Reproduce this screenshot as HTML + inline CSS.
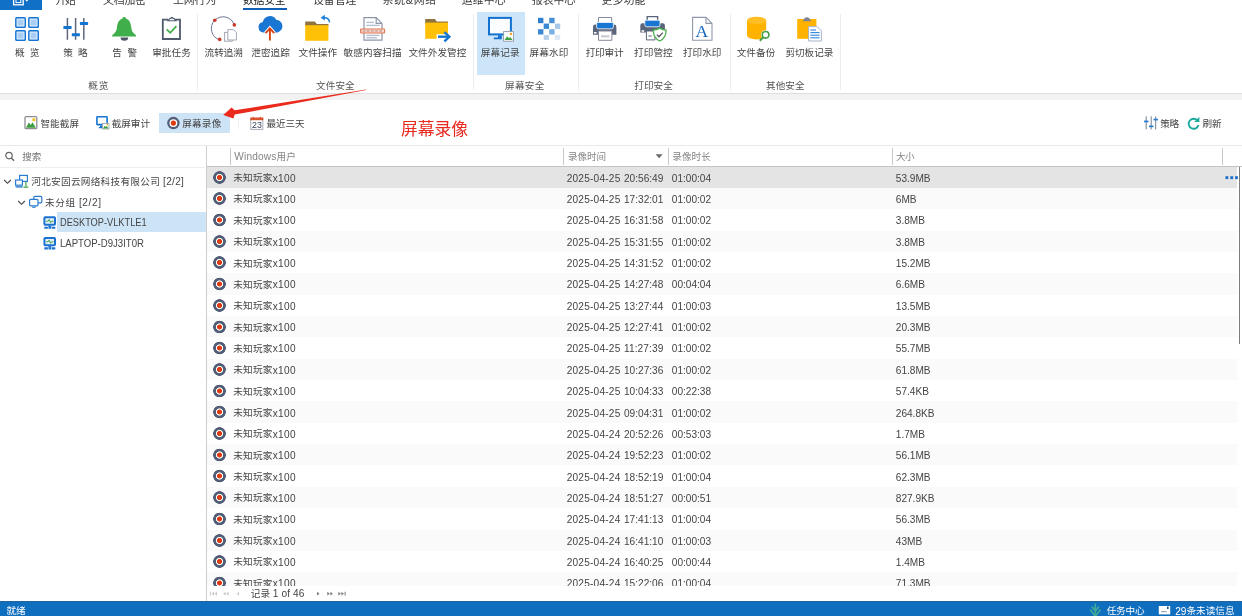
<!DOCTYPE html>
<html lang="zh-CN"><head><meta charset="utf-8"><title>屏幕录像</title>
<style>
*{box-sizing:border-box;margin:0;padding:0}
html,body{width:1242px;height:616px;overflow:hidden;background:#fff}
body{font-family:"Liberation Sans","Noto Sans CJK SC",sans-serif;font-size:9.6px;color:#444;position:relative}
.l{font-size:10.1px}
.t{position:absolute;white-space:nowrap;line-height:14px;height:14px}
#tabs{position:absolute;left:0;top:0;width:1242px;height:11px;background:#fff;overflow:hidden}
#appbtn{position:absolute;left:0;top:0;width:42px;height:9.5px;background:#106fc7}
.tab{font-size:10.9px;color:#3a3a3a;top:-7.3px}
#tabul{position:absolute;left:242.5px;top:7.5px;width:44.4px;height:2.4px;background:#115fb5}
#ribbon{position:absolute;left:0;top:11px;width:1242px;height:82.8px;background:#fff;border-bottom:1px solid #dedede}
#rbsel{position:absolute;left:477px;top:12.2px;width:47.8px;height:62.6px;background:#cce5f8}
.rb{top:45.5px;color:#444}
.gl{top:79.1px;color:#555}
.gsep{position:absolute;top:14px;width:1px;height:76px;background:#ededed}
#band{position:absolute;left:0;top:93.8px;width:1242px;height:5.8px;background:#f2f2f2}
#toolbar{position:absolute;left:0;top:100px;width:1242px;height:45.5px;background:#fff}
#tbsel{position:absolute;left:158.7px;top:112.7px;width:71px;height:20.2px;background:#cde3f6}
#tbsep{position:absolute;left:237.5px;top:117.5px;width:1px;height:11px;background:#efefef}
.tb{top:117.2px;color:#444}
#topline{position:absolute;left:0;top:145px;width:1242px;height:1px;background:#e9e9e9}
#searchline{position:absolute;left:0;top:167px;width:205px;height:1px;background:#efefef}
#trsel{position:absolute;left:57px;top:212.4px;width:148.6px;height:20.1px;background:#cde3f6}
#splitter{position:absolute;left:205.6px;top:167px;width:1px;height:434px;background:#ececec}
#vline{position:absolute;left:206.2px;top:146px;width:1px;height:455px;background:#cdcdcd}
.tr{color:#444}
#hdrline{position:absolute;left:207px;top:165.7px;width:1035px;height:1px;background:#c4c4c4}
.hc{top:149.7px;color:#858585}
.hs{position:absolute;top:147.5px;width:1px;height:17.5px;background:#c9c9c9}
.row{position:absolute;left:207.2px;width:1030.3px;height:21.4px;background:#fff}
.row.alt{background:#fafafa}
.row.sel{background:#e4e4e4}
.row .t{top:4.7px}
.row .t.l{top:5.2px}
.t .l{position:relative;top:.5px}
.rec{position:absolute;left:5.4px;top:4px;width:13.6px;height:13.6px;background:radial-gradient(circle closest-side,#dc3b0f 0,#dc3b0f 2.2px,#fff 2.8px,#fff 3.3px,#525e77 3.9px,#525e77 6px,rgba(82,94,119,0) 6.6px)}
#sbar{position:absolute;left:1238.6px;top:166.5px;width:1.6px;height:177px;background:#7d7d7d}
#pager{position:absolute;left:207.2px;top:586px;width:1034.8px;height:15px;background:#fff}
#status{position:absolute;left:0;top:601px;width:1242px;height:15px;background:#106ebf;border-top:1px solid #22649f}
.st{color:#fff;top:604px}
#anno{font-size:16.8px;line-height:22px;height:22px;color:#e82a1f;top:118.5px}
#app{position:absolute;left:0;top:0;width:1242px;height:616px;overflow:hidden;background:#fff;will-change:transform}
</style></head><body><div id="app">

<div id="tabs">
<div id="appbtn"></div>
<span class="t tab" style="left:55.4px;letter-spacing:-1.20px">开始</span>
<span class="t tab" style="left:103.0px;letter-spacing:-0.13px">文档加密</span>
<span class="t tab" style="left:172.9px;letter-spacing:-0.06px">上网行为</span>
<span class="t tab" style="left:243.1px;letter-spacing:-0.36px;color:#222">数据安全</span>
<span class="t tab" style="left:313.0px;letter-spacing:-0.03px">设备管理</span>
<span class="t tab" style="left:382.6px;letter-spacing:0.69px">系统&amp;网络</span>
<span class="t tab" style="left:461.7px;letter-spacing:0.17px">运维中心</span>
<span class="t tab" style="left:531.9px;letter-spacing:-0.03px">报表中心</span>
<span class="t tab" style="left:601.4px;letter-spacing:0.17px">更多功能</span>
<div id="tabul"></div>
</div>

<div id="ribbon"></div>
<div id="rbsel"></div>
<div class="gsep" style="left:197px"></div>
<div class="gsep" style="left:473px"></div>
<div class="gsep" style="left:578px"></div>
<div class="gsep" style="left:729.5px"></div>
<div class="gsep" style="left:840.3px"></div>
<span class="t rb" style="left:15.0px;letter-spacing:1.27px">概 览</span>
<span class="t rb" style="left:63.3px;letter-spacing:1.27px">策 略</span>
<span class="t rb" style="left:112.3px;letter-spacing:1.42px">告 警</span>
<span class="t rb" style="left:152.2px;letter-spacing:0.08px">审批任务</span>
<span class="t rb" style="left:204.6px;letter-spacing:-0.06px">流转追溯</span>
<span class="t rb" style="left:251.2px;letter-spacing:0.11px">泄密追踪</span>
<span class="t rb" style="left:298.5px;letter-spacing:0.08px">文件操作</span>
<span class="t rb" style="left:343.6px;letter-spacing:0.09px">敏感内容扫描</span>
<span class="t rb" style="left:408.4px;letter-spacing:0.07px">文件外发管控</span>
<span class="t rb" style="left:480.8px;letter-spacing:0.11px">屏幕记录</span>
<span class="t rb" style="left:529.6px;letter-spacing:0.11px">屏幕水印</span>
<span class="t rb" style="left:585.7px;letter-spacing:-0.16px">打印审计</span>
<span class="t rb" style="left:634.0px;letter-spacing:0.11px">打印管控</span>
<span class="t rb" style="left:683.0px">打印水印</span>
<span class="t rb" style="left:736.7px;letter-spacing:0.07px">文件备份</span>
<span class="t rb" style="left:785.5px;letter-spacing:-0.04px">剪切板记录</span>
<span class="t gl" style="left:88.3px;letter-spacing:0.81px">概览</span>
<span class="t gl" style="left:316.0px;letter-spacing:0.11px">文件安全</span>
<span class="t gl" style="left:505.0px;letter-spacing:0.34px">屏幕安全</span>
<span class="t gl" style="left:634.2px;letter-spacing:0.11px">打印安全</span>
<span class="t gl" style="left:766.0px;letter-spacing:0.08px">其他安全</span>
<div id="band"></div>

<div id="toolbar"></div>
<div id="tbsel"></div><div id="tbsep"></div>
<span class="t tb" style="left:40.4px;letter-spacing:0.08px">智能截屏</span>
<span class="t tb" style="left:111.8px;letter-spacing:-0.06px">截屏审计</span>
<span class="t tb" style="left:182.2px;letter-spacing:0.24px">屏幕录像</span>
<span class="t tb" style="left:266.4px;letter-spacing:-0.06px">最近三天</span>
<span class="t tb" style="left:1160.2px;letter-spacing:-0.29px">策略</span>
<span class="t tb" style="left:1202.6px;letter-spacing:-0.29px">刷新</span>
<div id="topline"></div>

<div id="searchline"></div>
<div id="trsel"></div>
<span class="t tr" style="left:22.3px;letter-spacing:-0.09px;top:150.2px;color:#727272">搜索</span>
<span class="t tr" style="left:31.3px;letter-spacing:0.31px;top:174.9px">河北安固云网络科技有限公司 <span class="l">[2/2]</span></span>
<span class="t tr" style="left:45.0px;letter-spacing:0.61px;top:195.6px">未分组 <span class="l">[2/2]</span></span>
<span class="t tr l" style="left:59.8px;transform:scaleX(0.915);transform-origin:0 0;top:216.3px">DESKTOP-VLKTLE1</span>
<span class="t tr l" style="left:59.8px;transform:scaleX(0.949);transform-origin:0 0;top:236.9px">LAPTOP-D9J3IT0R</span>
<div id="splitter"></div>
<div id="vline"></div>

<div class="hs" style="left:230.2px"></div>
<span class="t hc" style="left:234.3px;letter-spacing:0.18px"><span class="l">Windows</span>用户</span>
<div class="hs" style="left:563.2px"></div>
<span class="t hc" style="left:567.9px;letter-spacing:-0.02px">录像时间</span>
<div class="hs" style="left:668px"></div>
<span class="t hc" style="left:672.2px;letter-spacing:0.11px">录像时长</span>
<div class="hs" style="left:892.2px"></div>
<span class="t hc" style="left:896.1px;letter-spacing:-0.69px">大小</span>
<div class="hs" style="left:1222px"></div>

<div class="row sel" style="top:166.5px;height:21.4px;overflow:hidden"><i class="rec"></i><span class="t" style="left:26.0px;letter-spacing:0.29px">未知玩家<span class="l">x100</span></span><span class="t l" style="left:359.5px;letter-spacing:0.22px">2025-04-25</span><span class="t l" style="left:416.8px">20:56:49</span><span class="t l" style="left:464.6px;letter-spacing:-0.01px">01:00:04</span><span class="t l" style="left:688.6px">53.9MB</span></div>
<div class="row alt" style="top:187.8px;height:21.4px;overflow:hidden"><i class="rec"></i><span class="t" style="left:26.0px;letter-spacing:0.29px">未知玩家<span class="l">x100</span></span><span class="t l" style="left:359.5px;letter-spacing:0.22px">2025-04-25</span><span class="t l" style="left:416.8px">17:32:01</span><span class="t l" style="left:464.6px;letter-spacing:-0.01px">01:00:02</span><span class="t l" style="left:688.6px">6MB</span></div>
<div class="row" style="top:209.2px;height:21.4px;overflow:hidden"><i class="rec"></i><span class="t" style="left:26.0px;letter-spacing:0.29px">未知玩家<span class="l">x100</span></span><span class="t l" style="left:359.5px;letter-spacing:0.22px">2025-04-25</span><span class="t l" style="left:416.8px">16:31:58</span><span class="t l" style="left:464.6px;letter-spacing:-0.01px">01:00:02</span><span class="t l" style="left:688.6px">3.8MB</span></div>
<div class="row alt" style="top:230.6px;height:21.4px;overflow:hidden"><i class="rec"></i><span class="t" style="left:26.0px;letter-spacing:0.29px">未知玩家<span class="l">x100</span></span><span class="t l" style="left:359.5px;letter-spacing:0.22px">2025-04-25</span><span class="t l" style="left:416.8px">15:31:55</span><span class="t l" style="left:464.6px;letter-spacing:-0.01px">01:00:02</span><span class="t l" style="left:688.6px">3.8MB</span></div>
<div class="row" style="top:251.9px;height:21.4px;overflow:hidden"><i class="rec"></i><span class="t" style="left:26.0px;letter-spacing:0.29px">未知玩家<span class="l">x100</span></span><span class="t l" style="left:359.5px;letter-spacing:0.22px">2025-04-25</span><span class="t l" style="left:416.8px">14:31:52</span><span class="t l" style="left:464.6px;letter-spacing:-0.01px">01:00:02</span><span class="t l" style="left:688.6px">15.2MB</span></div>
<div class="row alt" style="top:273.2px;height:21.4px;overflow:hidden"><i class="rec"></i><span class="t" style="left:26.0px;letter-spacing:0.29px">未知玩家<span class="l">x100</span></span><span class="t l" style="left:359.5px;letter-spacing:0.22px">2025-04-25</span><span class="t l" style="left:416.8px">14:27:48</span><span class="t l" style="left:464.6px;letter-spacing:-0.01px">00:04:04</span><span class="t l" style="left:688.6px">6.6MB</span></div>
<div class="row" style="top:294.6px;height:21.4px;overflow:hidden"><i class="rec"></i><span class="t" style="left:26.0px;letter-spacing:0.29px">未知玩家<span class="l">x100</span></span><span class="t l" style="left:359.5px;letter-spacing:0.22px">2025-04-25</span><span class="t l" style="left:416.8px">13:27:44</span><span class="t l" style="left:464.6px;letter-spacing:-0.01px">01:00:03</span><span class="t l" style="left:688.6px">13.5MB</span></div>
<div class="row alt" style="top:316.0px;height:21.4px;overflow:hidden"><i class="rec"></i><span class="t" style="left:26.0px;letter-spacing:0.29px">未知玩家<span class="l">x100</span></span><span class="t l" style="left:359.5px;letter-spacing:0.22px">2025-04-25</span><span class="t l" style="left:416.8px">12:27:41</span><span class="t l" style="left:464.6px;letter-spacing:-0.01px">01:00:02</span><span class="t l" style="left:688.6px">20.3MB</span></div>
<div class="row" style="top:337.3px;height:21.4px;overflow:hidden"><i class="rec"></i><span class="t" style="left:26.0px;letter-spacing:0.29px">未知玩家<span class="l">x100</span></span><span class="t l" style="left:359.5px;letter-spacing:0.22px">2025-04-25</span><span class="t l" style="left:416.8px;letter-spacing:0.11px">11:27:39</span><span class="t l" style="left:464.6px;letter-spacing:-0.01px">01:00:02</span><span class="t l" style="left:688.6px">55.7MB</span></div>
<div class="row alt" style="top:358.6px;height:21.4px;overflow:hidden"><i class="rec"></i><span class="t" style="left:26.0px;letter-spacing:0.29px">未知玩家<span class="l">x100</span></span><span class="t l" style="left:359.5px;letter-spacing:0.22px">2025-04-25</span><span class="t l" style="left:416.8px">10:27:36</span><span class="t l" style="left:464.6px;letter-spacing:-0.01px">01:00:02</span><span class="t l" style="left:688.6px">61.8MB</span></div>
<div class="row" style="top:380.0px;height:21.4px;overflow:hidden"><i class="rec"></i><span class="t" style="left:26.0px;letter-spacing:0.29px">未知玩家<span class="l">x100</span></span><span class="t l" style="left:359.5px;letter-spacing:0.22px">2025-04-25</span><span class="t l" style="left:416.8px">10:04:33</span><span class="t l" style="left:464.6px;letter-spacing:-0.01px">00:22:38</span><span class="t l" style="left:688.6px">57.4KB</span></div>
<div class="row alt" style="top:401.4px;height:21.4px;overflow:hidden"><i class="rec"></i><span class="t" style="left:26.0px;letter-spacing:0.29px">未知玩家<span class="l">x100</span></span><span class="t l" style="left:359.5px;letter-spacing:0.22px">2025-04-25</span><span class="t l" style="left:416.8px">09:04:31</span><span class="t l" style="left:464.6px;letter-spacing:-0.01px">01:00:02</span><span class="t l" style="left:688.6px">264.8KB</span></div>
<div class="row" style="top:422.7px;height:21.4px;overflow:hidden"><i class="rec"></i><span class="t" style="left:26.0px;letter-spacing:0.29px">未知玩家<span class="l">x100</span></span><span class="t l" style="left:359.5px;letter-spacing:0.22px">2025-04-24</span><span class="t l" style="left:416.8px">20:52:26</span><span class="t l" style="left:464.6px;letter-spacing:-0.01px">00:53:03</span><span class="t l" style="left:688.6px">1.7MB</span></div>
<div class="row alt" style="top:444.1px;height:21.4px;overflow:hidden"><i class="rec"></i><span class="t" style="left:26.0px;letter-spacing:0.29px">未知玩家<span class="l">x100</span></span><span class="t l" style="left:359.5px;letter-spacing:0.22px">2025-04-24</span><span class="t l" style="left:416.8px">19:52:23</span><span class="t l" style="left:464.6px;letter-spacing:-0.01px">01:00:02</span><span class="t l" style="left:688.6px">56.1MB</span></div>
<div class="row" style="top:465.4px;height:21.4px;overflow:hidden"><i class="rec"></i><span class="t" style="left:26.0px;letter-spacing:0.29px">未知玩家<span class="l">x100</span></span><span class="t l" style="left:359.5px;letter-spacing:0.22px">2025-04-24</span><span class="t l" style="left:416.8px">18:52:19</span><span class="t l" style="left:464.6px;letter-spacing:-0.01px">01:00:04</span><span class="t l" style="left:688.6px">62.3MB</span></div>
<div class="row alt" style="top:486.8px;height:21.4px;overflow:hidden"><i class="rec"></i><span class="t" style="left:26.0px;letter-spacing:0.29px">未知玩家<span class="l">x100</span></span><span class="t l" style="left:359.5px;letter-spacing:0.22px">2025-04-24</span><span class="t l" style="left:416.8px">18:51:27</span><span class="t l" style="left:464.6px;letter-spacing:-0.01px">00:00:51</span><span class="t l" style="left:688.6px">827.9KB</span></div>
<div class="row" style="top:508.1px;height:21.4px;overflow:hidden"><i class="rec"></i><span class="t" style="left:26.0px;letter-spacing:0.29px">未知玩家<span class="l">x100</span></span><span class="t l" style="left:359.5px;letter-spacing:0.22px">2025-04-24</span><span class="t l" style="left:416.8px">17:41:13</span><span class="t l" style="left:464.6px;letter-spacing:-0.01px">01:00:04</span><span class="t l" style="left:688.6px">56.3MB</span></div>
<div class="row alt" style="top:529.5px;height:21.4px;overflow:hidden"><i class="rec"></i><span class="t" style="left:26.0px;letter-spacing:0.29px">未知玩家<span class="l">x100</span></span><span class="t l" style="left:359.5px;letter-spacing:0.22px">2025-04-24</span><span class="t l" style="left:416.8px">16:41:10</span><span class="t l" style="left:464.6px;letter-spacing:-0.01px">01:00:03</span><span class="t l" style="left:688.6px">43MB</span></div>
<div class="row" style="top:550.8px;height:21.4px;overflow:hidden"><i class="rec"></i><span class="t" style="left:26.0px;letter-spacing:0.29px">未知玩家<span class="l">x100</span></span><span class="t l" style="left:359.5px;letter-spacing:0.22px">2025-04-24</span><span class="t l" style="left:416.8px">16:40:25</span><span class="t l" style="left:464.6px;letter-spacing:-0.01px">00:00:44</span><span class="t l" style="left:688.6px">1.4MB</span></div>
<div class="row alt" style="top:572.2px;height:13.8px;overflow:hidden"><i class="rec"></i><span class="t" style="left:26.0px;letter-spacing:0.29px">未知玩家<span class="l">x100</span></span><span class="t l" style="left:359.5px;letter-spacing:0.22px">2025-04-24</span><span class="t l" style="left:416.8px">15:22:06</span><span class="t l" style="left:464.6px;letter-spacing:-0.01px">01:00:04</span><span class="t l" style="left:688.6px">71.3MB</span></div>
<div id="hdrline"></div>
<div id="sbar"></div>

<div id="pager"></div>
<span class="t" style="left:250.7px;letter-spacing:0.10px;top:586.6px;color:#444">记录 <span class="l">1 of 46</span></span>

<div id="status"></div>
<span class="t st" style="left:6.6px;letter-spacing:-0.19px">就绪</span>
<span class="t st" style="left:1106.7px;letter-spacing:-0.19px">任务中心</span>
<span class="t st" style="left:1175.2px;letter-spacing:0.02px"><span class="l">29</span>条未读信息</span>

<span class="t" id="anno" style="left:401.0px;letter-spacing:-0.01px">屏幕录像</span>
<svg id="icons" width="1242" height="616" viewBox="0 0 1242 616" style="position:absolute;left:0;top:0;pointer-events:none">
<!-- app button glyph -->
<g fill="none" stroke="#fff" stroke-width="1.3"><rect x="13.6" y="-3" width="9.6" height="7.8"/><rect x="16" y="-1" width="4.8" height="3.6" stroke-width="1"/></g>
<rect x="25.8" y="0" width="2" height="1.2" fill="#fff"/>

<!-- 1 概览 -->
<g fill="#a9cef5" stroke="#1474d1" stroke-width="1.5">
<rect x="15.85" y="17.85" width="9.4" height="9.4" rx=".8"/><rect x="28.85" y="17.85" width="9.4" height="9.4" rx=".8"/>
<rect x="15.85" y="30.85" width="9.4" height="9.4" rx=".8"/><rect x="28.85" y="30.85" width="9.4" height="9.4" rx=".8"/>
</g>
<g fill="none" stroke="#dcecfb" stroke-width=".9">
<rect x="17.2" y="19.2" width="6.7" height="6.7"/><rect x="30.2" y="19.2" width="6.7" height="6.7"/>
<rect x="17.2" y="32.2" width="6.7" height="6.7"/><rect x="30.2" y="32.2" width="6.7" height="6.7"/>
</g>

<!-- 2 策略 -->
<g stroke="#5e677b" stroke-width="1.5"><line x1="67.4" y1="18" x2="67.4" y2="39.8"/><line x1="75.6" y1="18" x2="75.6" y2="39.8"/><line x1="83.8" y1="18" x2="83.8" y2="39.8"/></g>
<g fill="#1474d1"><rect x="63.4" y="25.9" width="8.2" height="3.1" rx=".6"/><rect x="71.8" y="33.2" width="8.1" height="3.1" rx=".6"/><rect x="79.9" y="21.9" width="8.2" height="3.1" rx=".6"/></g>

<!-- 3 告警 bell -->
<path d="M120.6 37.6h7.6a3.8 3.2 0 0 1-7.6 0z" fill="#4d5668"/>
<circle cx="124.2" cy="18.9" r="2" fill="#40ae4a"/>
<path d="M124.2 18.4C129.2 18.4 130.8 22.6 131.2 27C131.6 31 132.8 32.8 136 35.2L136 36.5L112.2 36.5L112.2 35.2C115.4 32.8 116.6 31 117 27C117.4 22.6 119.2 18.4 124.2 18.4Z" fill="#40ae4a"/>

<!-- 4 审批任务 -->
<g fill="none" stroke="#505a6d" stroke-width="1.8"><path d="M168 19.7h-5.2v19.3h17.2v-19.3h-5.2"/></g>
<path d="M167.8 20.8l2.2-2.4h1a.9 1.1 0 0 1 1.8 0h1l2.2 2.4z" fill="#fff" stroke="#505a6d" stroke-width="1.1"/>
<path d="M166.7 29.3l3.5 3.5 6.2-6.6" fill="none" stroke="#40ae4a" stroke-width="1.8"/>

<!-- 5 流转追溯 -->
<path d="M219.5 39.8A11.8 11.8 0 1 1 234.3 24.75" fill="none" stroke="#6d7391" stroke-width="1"/>
<circle cx="214.8" cy="20.2" r="1.8" fill="#c9382b"/><circle cx="234.3" cy="24.9" r="1.8" fill="#c9382b"/><circle cx="219.7" cy="39.4" r="1.8" fill="#c9382b"/>
<g fill="#fff" stroke="#a3a7b5" stroke-width="1"><rect x="224.6" y="32.4" width="7.6" height="8.8"/><path d="M227.8 29.6h5.6l3 3v7.4h-8.6z"/></g>

<!-- 6 泄密追踪 -->
<path d="M263.4 32.4a5.2 5.2 0 0 1-.6-10.3 7.2 7.2 0 0 1 13.4-2.3 6.4 6.4 0 0 1 1.4 12.6z" fill="#1976d2"/>
<path d="M269.9 40.4v-12M265.4 33.1l4.5-4.9 4.5 4.9" fill="none" stroke="#fff" stroke-width="3.6"/>
<path d="M269.9 40.4v-11.6M265.6 33.1l4.3-4.7 4.3 4.7" fill="none" stroke="#d84315" stroke-width="1.9"/>

<!-- 7 文件操作 -->
<path d="M305.2 21.6h9.6l2 2.4h11.6v2h-23.2z" fill="#8d7440"/>
<rect x="305.2" y="25.2" width="23.2" height="15.6" fill="#ffc107"/>
<path d="M329.6 22.4c-.4-3-2.8-4.8-6.2-4.8" fill="none" stroke="#1e7fd6" stroke-width="1.5"/>
<path d="M324.8 14.8l-4.2 2.9 4.2 2.9z" fill="#1e7fd6"/>

<!-- 8 敏感内容扫描 -->
<path d="M364 17.6h12.2l5.8 5.8v16.8h-18z" fill="#fff" stroke="#8d95a8" stroke-width="1.2"/>
<path d="M376.2 17.6v5.8h5.8" fill="none" stroke="#8d95a8" stroke-width="1.2"/>
<g stroke="#b4c0d4" stroke-width="1.4"><line x1="366.4" y1="22.4" x2="374" y2="22.4"/><line x1="366.4" y1="25.4" x2="379.6" y2="25.4"/><line x1="366.4" y1="35.4" x2="379.6" y2="35.4"/><line x1="366.4" y1="37.8" x2="377" y2="37.8"/></g>
<rect x="360.6" y="29" width="24" height="4" rx=".8" fill="#f8ddd3" stroke="#e0714f" stroke-width="1.1"/>
<line x1="362.4" y1="31" x2="382.8" y2="31" stroke="#b98374" stroke-width="1.2" stroke-dasharray="3 1.2"/>

<!-- 9 文件外发管控 -->
<path d="M425.2 19h9.6l2 2.4h11.2v2h-22.8z" fill="#8d7440"/>
<rect x="425.2" y="22.6" width="22.8" height="16.2" fill="#ffc107"/>
<path d="M436.6 36.7h10" fill="none" stroke="#fff" stroke-width="5"/>
<path d="M438 36.7h10.4" fill="none" stroke="#1474d1" stroke-width="2.4"/>
<path d="M444.4 32.1l4.9 4.6-4.9 4.6" fill="none" stroke="#1474d1" stroke-width="2.4"/>

<!-- 11 屏幕水印 -->
<g>
<rect x="538" y="17.8" width="5.4" height="5.4" fill="#2f80d0"/><rect x="549.2" y="17.8" width="5.4" height="5.4" fill="#4a90d8"/>
<rect x="543.7" y="23.6" width="5.3" height="5.3" fill="#3a88d4"/><rect x="555" y="23.6" width="5.2" height="5.3" fill="#a8c8ea"/>
<rect x="538" y="29.2" width="5.4" height="5.3" fill="#3c88d4"/><rect x="549.2" y="29.2" width="5.4" height="5.3" fill="#7ab0e2"/>
<rect x="543.7" y="35" width="5.3" height="4.9" fill="#b8d0ec"/><rect x="555" y="35" width="5.2" height="4.9" fill="#dde8f5"/>
</g>

<!-- 10 屏幕记录 -->
<rect x="489" y="17.9" width="21.9" height="16.5" fill="#fbfdff" stroke="#1372d0" stroke-width="2"/>
<path d="M498 35.2h3.8v4.1h-8v-1.8h4.2z" fill="#1372d0"/>
<rect x="503.6" y="31.6" width="9.8" height="9.6" fill="#fff" stroke="#8f96a3" stroke-width=".9"/>
<path d="M504.6 39.9l2.5-3.6 1.8 2 1.4-1.4 2.3 3z" fill="#3fa046"/>
<circle cx="510.9" cy="33.9" r="1.2" fill="#f6a21a"/>

<!-- 12 打印审计 -->
<path d="M598.5 17.5h13.2v6h-13.2z" fill="#fff" stroke="#858b9a" stroke-width="1"/>
<path d="M593 27a2.4 2.4 0 0 1 2.4-2.4h18.6a2.4 2.4 0 0 1 2.4 2.4v7.8h-23.4z" fill="#5b657a"/>
<path d="M596.6 22.4h16.8v4.4a2 2 0 0 1-2 2h-12.8a2 2 0 0 1-2-2z" fill="#1976d2" stroke="#fff" stroke-width=".8"/>
<path d="M598.5 31h13.4v9.3h-13.4z" fill="#fff" stroke="#858b9a" stroke-width="1"/>
<rect x="594" y="32" width="2.6" height="1.6" fill="#fff"/>
<rect x="601" y="35.2" width="8.4" height="2.2" fill="#c9ccd5"/>

<!-- 13 打印管控 -->
<path d="M647.2 16.6h10.4v5h-10.4z" fill="#fff" stroke="#5b657a" stroke-width="1.4"/>
<path d="M640.3 25.4a2.2 2.2 0 0 1 2.2-2.2h20.2a2.2 2.2 0 0 1 2.2 2.2v7.2h-24.6z" fill="#5b657a"/>
<path d="M644.8 20.2h15.2v4.6a2 2 0 0 1-2 2h-11.2a2 2 0 0 1-2-2z" fill="#1976d2" stroke="#fff" stroke-width=".8"/>
<path d="M646.4 31h8.6v8.9h-8.6z" fill="#fff" stroke="#5b657a" stroke-width="1"/>
<rect x="641.6" y="30.2" width="2.6" height="1.6" fill="#fff"/>
<line x1="648.4" y1="36" x2="651.8" y2="36" stroke="#5b657a" stroke-width="1"/>
<path d="M659.7 28.1c2 1.3 4 1.9 6.4 2.1 0 5.6-2.2 8.8-6.4 10.8-4.2-2-6.4-5.2-6.4-10.8 2.4-.2 4.4-.8 6.4-2.1z" fill="#fff" stroke="#4caf50" stroke-width="1.3"/>
<path d="M656.8 34.6l2.2 2.2 3.8-4.2" fill="none" stroke="#55595f" stroke-width="1.3"/>

<!-- 14 打印水印 -->
<path d="M692.6 17.4h13.4l6 6v16.8h-19.4z" fill="#fff" stroke="#9198ab" stroke-width="1.1"/>
<path d="M706 17.4v6h6" fill="none" stroke="#9198ab" stroke-width="1.1"/>
<text x="701.8" y="37" font-family="Liberation Serif,serif" font-size="17.5" fill="#1565c0" text-anchor="middle">A</text>

<!-- 15 文件备份 -->
<path d="M747 20.4v15.2a9.6 3.8 0 0 0 19.2 0v-15.2z" fill="#ffb300"/>
<ellipse cx="756.6" cy="20.4" rx="9.6" ry="3.6" fill="#ffbf24"/>
<circle cx="765.6" cy="34.8" r="4.6" fill="#fff"/>
<circle cx="765.6" cy="34.8" r="3.3" fill="#fff" stroke="#43a047" stroke-width="1.6"/>
<line x1="763.2" y1="37.4" x2="759.8" y2="40.8" stroke="#43a047" stroke-width="2"/>

<!-- 16 剪切板记录 -->
<rect x="797.2" y="19" width="19.2" height="19.8" fill="#ffb300"/>
<path d="M802.6 21.2l2.2-3.4h1.2a.9.9 0 0 1 1.8 0h1.2l2.2 3.4z" fill="#7d8496"/>
<path d="M808.6 26.6h8.6l4.2 4.2v10.2h-12.8z" fill="#fff" stroke="#a8b4c8" stroke-width="1"/>
<g stroke="#2f86dc" stroke-width="1.1"><line x1="810.4" y1="30" x2="816" y2="30"/><line x1="810.4" y1="32.6" x2="819.6" y2="32.6"/><line x1="810.4" y1="35.2" x2="819.6" y2="35.2"/><line x1="810.4" y1="37.8" x2="819.6" y2="37.8"/></g>

<!-- toolbar: 智能截屏 -->
<rect x="25" y="116.7" width="11.8" height="12" rx="1" fill="#fff" stroke="#8e8e93" stroke-width="1.3"/>
<path d="M26 127.8l2.900-5.4 1.9 2.6 1.700-2.8 3.3 5.6z" fill="#3d9c3d"/>
<rect x="32.3" y="118.3" width="3" height="2.9" rx=".8" fill="#f2c11d"/>
<!-- toolbar: 截屏审计 -->
<rect x="96.9" y="116.8" width="10.2" height="7.8" rx=".6" fill="#fff" stroke="#1474d1" stroke-width="1.6"/>
<path d="M100 125.4h2.6v1.6h.8v1.2h-4.6v-1.2h1.2z" fill="#1474d1"/>
<rect x="102.4" y="123.4" width="6.6" height="5.6" fill="#fff" stroke="#9aa1ad" stroke-width=".8"/>
<path d="M103 128.4l1.700-2.6 1.1 1.3 1-1.2 1.7 2.5z" fill="#3d9c3d"/>
<rect x="106.6" y="124" width="1.5" height="1.4" fill="#f2c11d"/>
<!-- toolbar: 屏幕录像 rec -->
<circle cx="173.4" cy="123.1" r="5.1" fill="#fff" stroke="#525e77" stroke-width="2.3"/>
<circle cx="173.4" cy="123.1" r="2.6" fill="#dc3b0f"/>
<!-- toolbar: calendar -->
<rect x="250.8" y="118.6" width="12" height="10.8" fill="#fff" stroke="#a9abb5" stroke-width="1"/>
<rect x="250.3" y="117.5" width="13" height="2.7" fill="#d9532c"/>
<rect x="252.6" y="116.9" width="1.2" height="1.4" fill="#d9532c"/><rect x="259.8" y="116.9" width="1.2" height="1.4" fill="#d9532c"/>
<text x="256.9" y="128.3" font-family="Liberation Sans,sans-serif" font-size="8.8" fill="#3d4459" text-anchor="middle">23</text>
<!-- toolbar: 策略 sliders -->
<g stroke="#6f7d91" stroke-width="1"><line x1="1146.2" y1="116.4" x2="1146.2" y2="129.4"/><line x1="1151.2" y1="116.4" x2="1151.2" y2="129.4"/><line x1="1155.7" y1="116.4" x2="1155.7" y2="129.4"/></g>
<g fill="#2b7cd3"><rect x="1144" y="120.6" width="4.5" height="1.7"/><rect x="1149" y="125.5" width="4.5" height="1.7"/><rect x="1153.5" y="118.7" width="4.4" height="1.7"/></g>
<!-- toolbar: refresh -->
<path d="M1197.3 120.3a5 5 0 1 0 1.2 4.8" fill="none" stroke="#1aa99d" stroke-width="1.8"/>
<path d="M1199.4 116.8v5.2h-5.2z" fill="#1aa99d"/>

<!-- search icon -->
<circle cx="9" cy="155.6" r="3.2" fill="none" stroke="#666" stroke-width="1.2"/>
<line x1="11.4" y1="158" x2="14" y2="160.8" stroke="#666" stroke-width="1.5"/>
<!-- tree chevrons -->
<path d="M4.2 180l3.3 3.3 3.3-3.3" fill="none" stroke="#444" stroke-width="1.1"/>
<path d="M18.2 201l3.3 3.3 3.3-3.3" fill="none" stroke="#444" stroke-width="1.1"/>
<!-- network icon -->
<rect x="19.6" y="175.4" width="7.8" height="6" fill="#fff" stroke="#2b7cd3" stroke-width="1.2"/>
<rect x="15.6" y="180" width="6.8" height="5.2" fill="#fff" stroke="#2b7cd3" stroke-width="1.2"/>
<path d="M15.6 186.2h7v1.4h-7z" fill="#2b7cd3"/>
<path d="M25.9 182v4.6" fill="none" stroke="#3fa046" stroke-width="1.2"/><path d="M23.4 186.4h4.8v1.3h-4.8z" fill="#3fa046"/>
<!-- group icon -->
<rect x="33.8" y="196.4" width="8" height="6.4" rx="1" fill="#fff" stroke="#2b7cd3" stroke-width="1.2"/>
<rect x="29.6" y="199.4" width="8.4" height="6.4" rx="1" fill="#fff" stroke="#2b7cd3" stroke-width="1.2"/>
<path d="M32.2 207.2h3.4" stroke="#2b7cd3" stroke-width="1.2"/>
<!-- pc icons -->
<g><rect x="44.4" y="217.3" width="10.6" height="7.4" rx=".8" fill="#e3f0fb" stroke="#1b72d0" stroke-width="2"/>
<path d="M46.2 221.2h2l1-1.7 1.4 3.2 1-1.5h2" fill="none" stroke="#3fa046" stroke-width="1"/>
<path d="M44.3 226.7h3.6v2.1h-3.6zM48.5 226.7h2.6v2.1h-2.6zM51.7 226.7h3.6v2.1h-3.6z" fill="#1b72d0"/><path d="M48.3 225.5h3v1.4h-3z" fill="#1b72d0"/></g>
<g><rect x="44.4" y="237.9" width="10.6" height="7.4" rx=".8" fill="#e3f0fb" stroke="#1b72d0" stroke-width="2"/>
<path d="M46.2 241.8h2l1-1.7 1.4 3.2 1-1.5h2" fill="none" stroke="#3fa046" stroke-width="1"/>
<path d="M44.3 247.3h3.6v2.1h-3.6zM48.5 247.3h2.6v2.1h-2.6zM51.7 247.3h3.6v2.1h-3.6z" fill="#1b72d0"/><path d="M48.3 246.1h3v1.4h-3z" fill="#1b72d0"/></g>

<!-- header sort arrow -->
<path d="M655.6 154.2h7l-3.5 4z" fill="#6a6a6a"/>
<!-- row 1 more dots -->
<g fill="#1e6fc8"><rect x="1225.5" y="176.2" width="2.8" height="2.9"/><rect x="1230.3" y="176.2" width="2.8" height="2.9"/><rect x="1235.1" y="176.2" width="2.8" height="2.9"/></g>

<!-- pager glyphs -->
<g fill="#c6c6c6">
<rect x="209.8" y="591.8" width="1" height="3.8"/><path d="M214 591.8v3.8l-2.5-1.9zM217 591.8v3.8l-2.5-1.9z"/>
<path d="M225.600 591.8v3.8l-2.5-1.9zM228.700 591.8v3.8l-2.5-1.9z"/>
<path d="M239 591.8v3.8l-2.3-1.9z"/>
</g>
<g fill="#7a7a7a">
<path d="M317 591.8v3.8l2.5-1.9z"/>
<path d="M327.300 591.8v3.8l2.5-1.9zM330.400 591.8v3.8l2.5-1.9z"/>
<path d="M338.400 591.8v3.8l2.5-1.9zM341.400 591.8v3.8l2.5-1.9z"/><rect x="344.6" y="591.8" width="1" height="3.8"/>
</g>

<!-- status icons -->
<path d="M1095.3 603.6v12.4M1090.2 609.4l5.1 7.2 5.1-7.200M1091.8 606.4l3.5 5M1098.8 606.4l-3.5 5" fill="none" stroke="#49b390" stroke-width="1.7" opacity=".85"/>
<rect x="1158.8" y="606" width="11.4" height="8.4" fill="#fff"/>
<rect x="1167" y="606.6" width="1.6" height="2.4" fill="#1b4f86"/>
<line x1="1161.2" y1="611.6" x2="1166.6" y2="611.6" stroke="#9aa7b5" stroke-width="1.2"/>

<!-- red annotation arrow -->
<path d="M366.2 89.5L234.6 110.3L231.6 107.5L223.3 114.9L233.4 118.4L234.7 114.6L366.2 90.1Z" fill="#ea2a1c"/>
</svg>

</div></body></html>
